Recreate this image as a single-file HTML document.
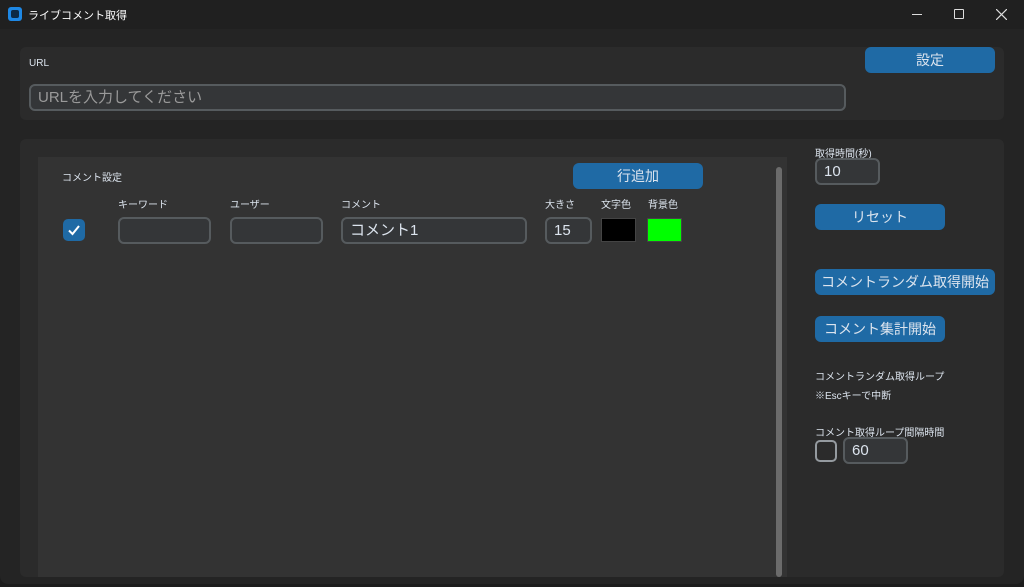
<!DOCTYPE html>
<html><head><meta charset="utf-8"><style>
*{margin:0;padding:0;box-sizing:border-box}
body{width:1024px;height:587px;background:#1c1c1c;font-family:"Liberation Sans","Noto Sans CJK JP",sans-serif;color:#dce4ee;position:relative;overflow:hidden}
.a{position:absolute}
.win{left:0;top:0;width:1024px;height:584px;background:#242424;border-radius:0 0 8px 8px}
.title{left:0;top:0;width:1024px;height:29px;background:#202020}
.fr{background:#2b2b2b;border-radius:6px}
.btn{background:#1f6aa5;border-radius:6px;color:#dce4ee;font-size:14px;text-align:center;line-height:26px;white-space:nowrap}
.ent{background:#343638;border:2px solid #565b5e;border-radius:6px;color:#dce4ee;font-size:15px;padding-left:7px;line-height:24px;white-space:nowrap}
.lb{font-size:10px;color:#dce4ee;white-space:nowrap}
</style></head><body>
<div class="a win"></div>
<div class="a title"></div>
<div class="a" style="left:8px;top:7px;width:14px;height:14px;background:#1e88e5;border-radius:3px"><div class="a" style="left:3px;top:3px;width:8px;height:8px;background:#0d2a45;border-radius:2px"></div></div>
<div class="a" style="left:28px;top:7px;font-size:11px;color:#fff">ライブコメント取得</div>
<div class="a" style="left:912px;top:14px;width:10px;height:1px;background:#ddd"></div>
<div class="a" style="left:954px;top:9px;width:10px;height:10px;border:1px solid #ddd;border-radius:1px"></div>
<svg class="a" style="left:996px;top:9px" width="11" height="11"><path d="M0 0L11 11M11 0L0 11" stroke="#ddd" stroke-width="1.2"/></svg>

<div class="a fr" style="left:20px;top:47px;width:984px;height:73px"></div>
<div class="a lb" style="left:29px;top:58px">URL</div>
<div class="a ent" style="left:29px;top:84px;width:817px;height:27px;color:#9a9a9a">URLを入力してください</div>
<div class="a btn" style="left:865px;top:47px;width:130px;height:26px">設定</div>

<div class="a fr" style="left:20px;top:139px;width:984px;height:438px"></div>
<div class="a" style="left:38px;top:157px;width:749px;height:420px;background:#333333"></div>
<div class="a" style="left:776px;top:167px;width:6px;height:410px;background:#6b6b6b;border-radius:3px"></div>

<div class="a lb" style="left:62px;top:169px">コメント設定</div>
<div class="a btn" style="left:573px;top:163px;width:130px;height:26px">行追加</div>
<div class="a lb" style="left:118px;top:196px">キーワード</div>
<div class="a lb" style="left:230px;top:196px">ユーザー</div>
<div class="a lb" style="left:341px;top:196px">コメント</div>
<div class="a lb" style="left:545px;top:196px">大きさ</div>
<div class="a lb" style="left:601px;top:196px">文字色</div>
<div class="a lb" style="left:648px;top:196px">背景色</div>
<div class="a" style="left:63px;top:219px;width:22px;height:22px;background:#1f6aa5;border-radius:5px"><svg class="a" style="left:5px;top:5px" width="12" height="12"><path d="M1 6.5L4.5 10L11 2" stroke="#fff" stroke-width="2" fill="none"/></svg></div>
<div class="a ent" style="left:118px;top:217px;width:93px;height:27px"></div>
<div class="a ent" style="left:230px;top:217px;width:93px;height:27px"></div>
<div class="a ent" style="left:341px;top:217px;width:186px;height:27px">コメント1</div>
<div class="a ent" style="left:545px;top:217px;width:47px;height:27px">15</div>
<div class="a" style="left:601px;top:218px;width:35px;height:24px;background:#000;border:1px solid #444"></div>
<div class="a" style="left:647px;top:218px;width:35px;height:24px;background:#00ff00;border:1px solid #444"></div>

<div class="a lb" style="left:815px;top:145px">取得時間(秒)</div>
<div class="a ent" style="left:815px;top:158px;width:65px;height:27px">10</div>
<div class="a btn" style="left:815px;top:204px;width:130px;height:26px">リセット</div>
<div class="a btn" style="left:815px;top:269px;width:180px;height:26px">コメントランダム取得開始</div>
<div class="a btn" style="left:815px;top:316px;width:130px;height:26px">コメント集計開始</div>
<div class="a lb" style="left:815px;top:368px">コメントランダム取得ループ</div>
<div class="a lb" style="left:815px;top:387px">※Escキーで中断</div>
<div class="a lb" style="left:815px;top:424px">コメント取得ループ間隔時間</div>
<div class="a" style="left:815px;top:440px;width:22px;height:22px;border:2px solid #949a9f;border-radius:5px"></div>
<div class="a ent" style="left:843px;top:437px;width:65px;height:27px">60</div>
</body></html>
